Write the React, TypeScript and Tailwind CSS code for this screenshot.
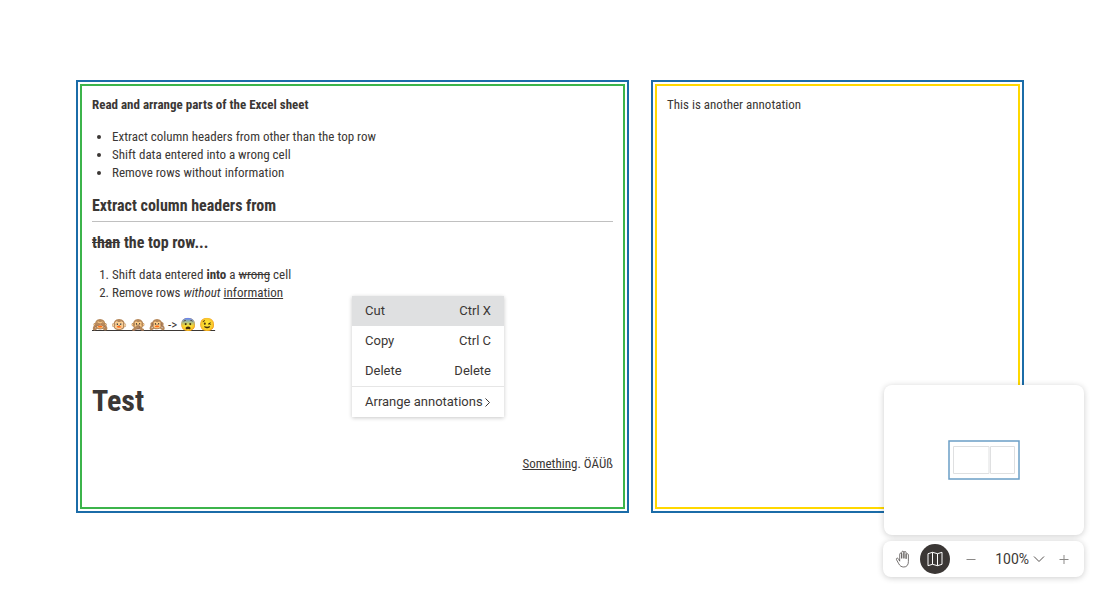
import { useState, type ReactNode } from 'react';

function Annotation({ tone, children }: { tone: string; children?: ReactNode }) {
  return (
    <section className="flex flex-col border-2 border-[#1b6ca8] bg-white p-0.5">
      <div className={`min-h-[425px] flex-1 border-2 px-2.5 pt-2.5 ${tone}`}>{children}</div>
    </section>
  );
}

function MenuItem({ label, shortcut, active }: { label: string; shortcut: string; active?: boolean }) {
  return (
    <button
      type="button"
      role="menuitem"
      className={`flex h-[30px] w-full items-center justify-between px-[13px] ${active ? 'bg-[#dfe0e1]' : 'bg-white'}`}
    >
      <span>{label}</span>
      <span>{shortcut}</span>
    </button>
  );
}

function HandIcon() {
  return (
    <svg viewBox="0 0 16 18" className="h-[18px] w-4" fill="none" stroke="#55514f" strokeWidth="0.8" strokeLinecap="round" strokeLinejoin="round">
      <path d="M4.700 10.800V4.200c0-1.500 2-1.500 2 0V8.400V2.400c0-1.600 2.200-1.600 2.200 0v6V2.600c0-1.500 2.200-1.500 2.200 0v6.200V4.800c0-1.500 2.300-1.400 2.300.1v6.600c0 3.400-1.600 5.500-4.600 5.500-2.400 0-3.900-1.100-5-3.200L1.500 9.700C.9 8.300 2.400 7.400 3.300 8.600Z" />
    </svg>
  );
}

function MapIcon() {
  return (
    <svg viewBox="0 0 16 16" className="size-4" fill="none" stroke="#ffffff" strokeWidth="1" strokeLinejoin="round">
      <path d="M1 2.700 5.500 1.300 10.500 2.700 15 1.300V13.300L10.500 14.700 5.500 13.300 1 14.700ZM5.500 1.300v12M10.500 2.700v12" />
    </svg>
  );
}

export default function App() {
  const [mapOpen, setMapOpen] = useState(true);

  return (
    <main className="relative min-h-screen bg-white px-[76px] pt-20 pb-20 font-['Roboto',sans-serif] text-[13px] text-[#3b3735]">
      <div className="grid grid-cols-[553fr_373fr] gap-[22px] font-['Roboto_Condensed','Liberation_Sans_Narrow','Roboto',sans-serif] leading-[18px]">
        <Annotation tone="border-[#3cb44b]">
          <p className="font-bold">Read and arrange parts of the Excel sheet</p>
          <ul className="mt-3.5 list-disc pl-5">
            <li>Extract column headers from other than the top row</li>
            <li>Shift data entered into a wrong cell</li>
            <li>Remove rows without information</li>
          </ul>
          <h2 className="mt-3.5 border-b border-[#c0c0c0] pb-[5px] text-base leading-5 font-bold">Extract column headers from</h2>
          <h2 className="mt-[11px] text-base leading-5 font-bold">
            <s>than</s> the top row...
          </h2>
          <ol className="mt-[13px] list-decimal pl-5">
            <li>
              Shift data entered <b>into</b> a <s>wrong</s> cell
            </li>
            <li>
              Remove rows <i>without</i> <u>information</u>
            </li>
          </ol>
          <p className="mt-3.5">
            <u>🙈 🐵 🙊 🙉 -&gt; 😨 😉</u>
          </p>
          <h1 className="mt-[47px] text-[30px] leading-10 font-bold">Test</h1>
          <p className="mt-[34px] text-right">
            <u>Something</u>. ÖÄÜß
          </p>
        </Annotation>
        <Annotation tone="border-[#ffd800]">
          <p>This is another annotation</p>
        </Annotation>
      </div>

      <div role="menu" className="absolute top-[296px] left-[352px] w-[152px] bg-white shadow-[0_1px_4px_rgba(0,0,0,0.22)]">
        <MenuItem label="Cut" shortcut="Ctrl X" active />
        <MenuItem label="Copy" shortcut="Ctrl C" />
        <MenuItem label="Delete" shortcut="Delete" />
        <button type="button" role="menuitem" className="flex h-[31px] w-full items-center gap-0.5 border-t border-[#e6e6e6] px-[13px] whitespace-nowrap">
          Arrange annotations
          <svg viewBox="0 0 5 9" className="h-[9px] w-[5px] shrink-0" fill="none" stroke="#3b3735" strokeWidth="1">
            <path d="M.5.5 4.500 4.500 .5 8.500" />
          </svg>
        </button>
      </div>

      <aside className="absolute right-4 bottom-4 flex w-[201px] flex-col gap-1.5">
        {mapOpen && (
          <div className="ml-px flex h-[150px] items-center justify-center rounded-lg bg-white shadow-[0_1px_6px_rgba(0,0,0,0.2)]">
            <svg viewBox="0 0 72 40" className="h-10 w-[72px]" fill="none">
              <rect x="1" y="1" width="70" height="38" stroke="#1b6ca8" strokeOpacity="0.65" strokeWidth="1.500" />
              <path d="M5.500 6.500h35.500v27H5.500ZM42.500 6.500h24v27h-24Z" stroke="#dfe0e1" />
            </svg>
          </div>
        )}
        <div className="flex h-9 items-center rounded-lg bg-white px-3 shadow-[0_1px_6px_rgba(0,0,0,0.2)]">
          <button type="button" aria-label="Pan">
            <HandIcon />
          </button>
          <button
            type="button"
            aria-label="Toggle overview"
            aria-pressed={mapOpen}
            onClick={() => setMapOpen(!mapOpen)}
            className="ml-[9px] flex size-[30px] items-center justify-center rounded-full bg-[#3b3735]"
          >
            <MapIcon />
          </button>
          <button type="button" aria-label="Zoom out" className="ml-4">
            <svg viewBox="0 0 10 10" className="size-2.5" stroke="#8b8987" strokeWidth="1">
              <path d="M.5 5.500h9" />
            </svg>
          </button>
          <button type="button" className="ml-auto flex items-center gap-1 text-sm">
            100%
            <svg viewBox="0 0 12 8" className="h-2 w-3" fill="none" stroke="#55514f" strokeWidth="1">
              <path d="M1 1.500 6 6.500 11 1.500" />
            </svg>
          </button>
          <button type="button" aria-label="Zoom in" className="mr-[3px] ml-3.5">
            <svg viewBox="0 0 10 10" className="size-2.5" stroke="#8b8987" strokeWidth="1">
              <path d="M.5 5.500h9M5 1v9" />
            </svg>
          </button>
        </div>
      </aside>
    </main>
  );
}
